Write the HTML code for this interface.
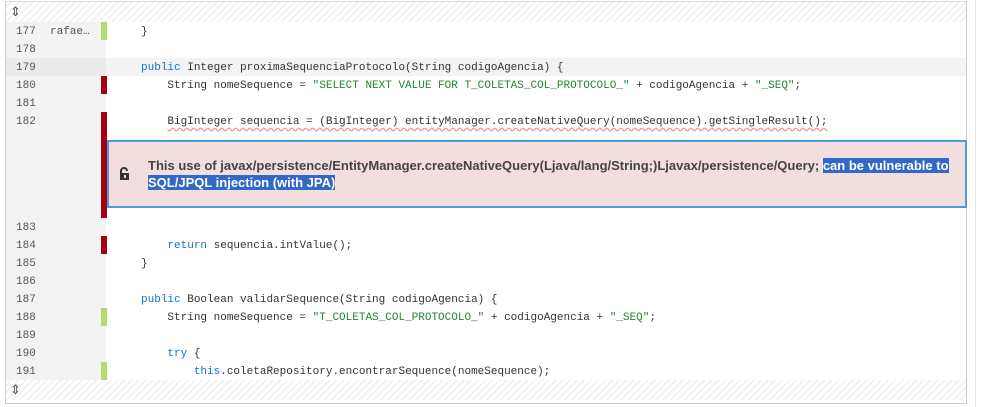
<!DOCTYPE html>
<html><head><style>
body{margin:0;background:#fff;width:983px;height:407px;position:relative;overflow:hidden;font-family:"Liberation Sans",sans-serif}
.box{position:absolute;left:5px;top:1px;width:960px;height:401px;border:1px solid #ccc;border-top-color:#ddd}
.bar{position:absolute;left:0;width:960px;height:20px;background:repeating-linear-gradient(135deg,#fff 0 3px,#f3f3f3 3px 5px)}
.exp{position:absolute;left:4px;font-size:13px;color:#555}
.row{position:absolute;left:0;width:960px;height:18px;font-family:"Liberation Mono","DejaVu Sans Mono",monospace;font-size:11px;line-height:18px;color:#333}
.row span{top:1px}
.g{position:absolute;left:0;top:0;width:100px;height:100%;background:#f3f3f3}
.n{position:absolute;left:10px;color:#555}
.a{position:absolute;left:44px;color:#555}
.m{position:absolute;left:95px;top:0;width:6px;height:100%}
.c{position:absolute;left:102px;white-space:pre}
.c span{position:static}
.k{color:#0f77c8}.s{color:#1e8a2a}
.red{background:#a50012}.grn{background:#b5d86f}
.hl{background:#f3f3f3}
</style></head><body>
<div style="position:absolute;left:975px;top:0;width:1px;height:407px;background:#e6e6e6"></div>
<div class="box">
<div class="bar" style="top:0"><span class="exp" style="top:2px">⇕</span></div>
<div class="row" style="top:20px"><div class="g"></div><span class="n">177</span><span class="a">rafae…</span><div class="m grn"></div><span class="c">     }</span></div>
<div class="row" style="top:38px"><div class="g"></div><span class="n">178</span></div>
<div class="row hl" style="top:56px"><div class="g" style="background:#ebebeb"></div><span class="n">179</span><span class="c">     <span class="k">public</span> Integer proximaSequenciaProtocolo(String codigoAgencia) {</span></div>
<div class="row" style="top:74px"><div class="g"></div><span class="n">180</span><div class="m red"></div><span class="c">         String nomeSequence = <span class="s">"SELECT NEXT VALUE FOR T_COLETAS_COL_PROTOCOLO_"</span> + codigoAgencia + <span class="s">"_SEQ"</span>;</span></div>
<div class="row" style="top:92px"><div class="g"></div><span class="n">181</span></div>
<div class="row" style="top:110px"><div class="g"></div><span class="n">182</span><span class="c">         <span style="text-decoration:underline wavy #e88;text-underline-offset:3px">BigInteger sequencia = (BigInteger) entityManager.createNativeQuery(nomeSequence).getSingleResult();</span></span></div>
<div class="g" style="position:absolute;left:0;top:128px;width:100px;height:88px"></div>
<div class="red" style="position:absolute;left:95px;top:110px;width:6px;height:106px"></div>
<div style="position:absolute;left:101px;top:138px;width:856px;height:64px;background:#f2dede;border:2px solid #4b9fd5;font-weight:bold;font-size:13px;color:#444;line-height:17px">
<svg style="position:absolute;left:10px;top:25px" width="12" height="14" viewBox="0 0 12 14"><path d="M2 6V4a3 3 0 0 1 6 0" fill="none" stroke="#333" stroke-width="2"/><rect x="1" y="6" width="9" height="7" fill="#333"/><rect x="5" y="8" width="2" height="3" fill="#f2dede"/></svg>
<div style="position:absolute;left:39px;top:15px;width:810px">This use of javax/persistence/EntityManager.createNativeQuery(Ljava/lang/String;)Ljavax/persistence/Query; <span style="background:#3169c6;color:#fff">can be vulnerable to SQL/JPQL injection (with JPA)</span></div>
</div>
<div class="row" style="top:216px"><div class="g"></div><span class="n">183</span></div>
<div class="row" style="top:234px"><div class="g"></div><span class="n">184</span><div class="m red"></div><span class="c">         <span class="k">return</span> sequencia.intValue();</span></div>
<div class="row" style="top:252px"><div class="g"></div><span class="n">185</span><span class="c">     }</span></div>
<div class="row" style="top:270px"><div class="g"></div><span class="n">186</span></div>
<div class="row" style="top:288px"><div class="g"></div><span class="n">187</span><span class="c">     <span class="k">public</span> Boolean validarSequence(String codigoAgencia) {</span></div>
<div class="row" style="top:306px"><div class="g"></div><span class="n">188</span><div class="m grn"></div><span class="c">         String nomeSequence = <span class="s">"T_COLETAS_COL_PROTOCOLO_"</span> + codigoAgencia + <span class="s">"_SEQ"</span>;</span></div>
<div class="row" style="top:324px"><div class="g"></div><span class="n">189</span></div>
<div class="row" style="top:342px"><div class="g"></div><span class="n">190</span><span class="c">         <span class="k">try</span> {</span></div>
<div class="row" style="top:360px"><div class="g"></div><span class="n">191</span><div class="m grn"></div><span class="c">             <span class="k">this</span>.coletaRepository.encontrarSequence(nomeSequence);</span></div>
<div class="bar" style="top:378px"><span class="exp" style="top:2px">⇕</span></div>
</div>
</body></html>
